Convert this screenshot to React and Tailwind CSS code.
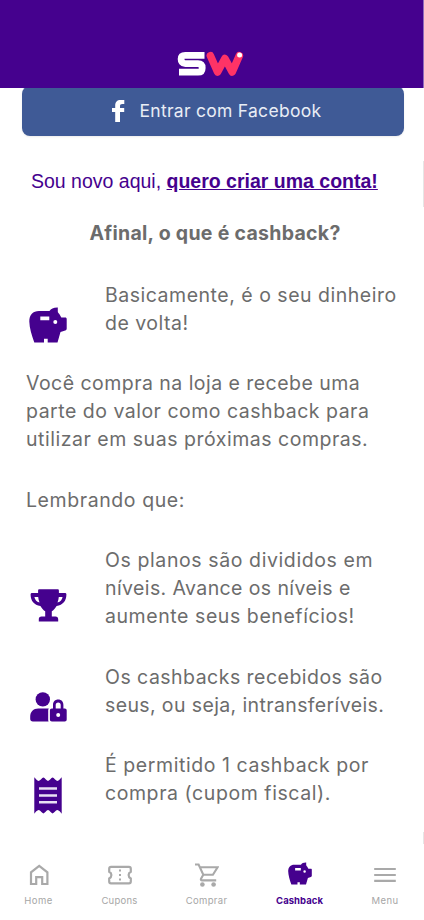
function Logo() {
  return (
    <svg className="h-[26px] w-[68px]" viewBox="0 0 68 26" fill="none" role="img" aria-label="SW">
      <path d="M27.500 4.300H8.300C5.300 4.300 4.100 5.600 4.100 8s1.200 4.700 4.200 4.700H21c3 0 4.200 1.500 4.200 4.200S24 21.200 21 21.200H2" stroke="#fff" strokeWidth="6.800" />
      <path d="M33.400 4.700 40.600 21 47.900 7.500 55.200 21 62.300 4.700" stroke="#ff3366" strokeWidth="7.600" strokeLinecap="round" strokeLinejoin="round" />
      <circle cx="62.600" cy="4" r="2.500" fill="#fff" />
    </svg>
  );
}

function Piggy({ className }) {
  return (
    <svg className={className} viewBox="0 0 38 36" fill="#45018e">
      <path
        fillRule="evenodd"
        d="M10 4h10.500C22 1.500 24.500.3 28.800.4v3.800c-.1 1.300.8 2 1.700 3l1.800 3.300H36c1.300 0 1.700.5 1.700 1.600v9.400c0 1.100-.5 1.600-1.500 2L31.500 25 28.500 35.500H18.700v-3.700h-3.700v3.700H5.300C2.500 27.500.5 21 .3 14.500.2 8 4 4 10 4ZM11.300 9.400v3.800h9V9.400h-9Zm15 3.600a2 2 0 1 0 0 4 2 2 0 0 0 0-4Z"
      />
    </svg>
  );
}

function Trophy() {
  return (
    <svg className="h-[33px] w-[37px]" viewBox="0 0 37 33" fill="#45018e">
      <path
        fillRule="evenodd"
        d="M9.500.3h18c.9 0 1.400.5 1.400 1.400v2.400h6c1 0 1.500.5 1.500 1.500 0 6.400-3.500 10.500-9.800 11.400-1.600 2.700-3.200 4.300-4.800 5.200v5.400h3.700c1.700 0 2.700 1 2.700 2.700v2.100H8.800v-2.100c0-1.700 1-2.700 2.700-2.700h3.700v-5.400c-1.600-.9-3.200-2.500-4.800-5.200C4.100 16.100.6 12 .6 5.600c0-1 .5-1.500 1.500-1.500h6V1.700C8.100.8 8.600.3 9.500.3ZM4.400 7.900c.5 2.600 2 4.600 5.100 5.500-.7-1.800-1.200-3.700-1.300-5.500H4.400Zm24.400 0c-.1 1.800-.6 3.700-1.300 5.500 3.100-.9 4.600-2.900 5.100-5.500h-3.800Z"
      />
    </svg>
  );
}

function UserLock() {
  return (
    <svg className="h-[30px] w-[37px]" viewBox="0 0 37 30" fill="#45018e">
      <circle cx="12.800" cy="7.400" r="7.200" />
      <path d="M8.300 16.500h10.500c-.5.600-.6 1.300-.6 2v9.200c0 .7.100 1.200.4 1.700H2.900C1.200 29.400.2 28.400.2 26.700v-2c0-4.900 3.200-8.200 8.100-8.200Z" />
      <path
        fillRule="evenodd"
        d="M23 16.500V13c0-3.300 2-5.400 5.200-5.400s5.200 2.100 5.200 5.400v3.500h1.300c1.300 0 2 .7 2 2v8.900c0 1.300-.7 2-2 2H21.900c-1.300 0-2-.7-2-2v-8.900c0-1.300.7-2 2-2H23Zm2.700 0h5V13c0-1.600-.9-2.600-2.500-2.600s-2.500 1-2.500 2.600v3.500ZM28.200 20.900a2 2 0 1 0 0 4 2 2 0 0 0 0-4Z"
      />
    </svg>
  );
}

function Receipt() {
  return (
    <svg className="h-[37px] w-[28px]" viewBox="0 0 28 37">
      <path
        fill="#45018e"
        d="M.3.300C1.500 1.500 3 3.900 4.700 3.900S8 .500 9.400.500s3 3.400 4.600 3.400S17.200.500 18.600.500s3 3.400 4.700 3.400S26.500 1.500 27.700.300V36.700C26.500 35.500 25 33.100 23.300 33.100S20 36.500 18.600 36.500s-3-3.400-4.600-3.400S10.800 36.500 9.400 36.500s-3-3.400-4.700-3.400S1.500 35.500.3 36.700Z"
      />
      <path d="M5 11.600h18M5 18.400h18M5 25.200h18" stroke="#e9dff4" strokeWidth="2.500" />
    </svg>
  );
}

function FacebookF() {
  return (
    <svg className="h-[22px] w-[13px]" viewBox="0 0 13 22" fill="#fff">
      <path d="M3.200 22V11.900H0V8h3.200V5.600C3.200 2.100 5.100.1 8.600.1h3.700v4h-2c-1.700 0-2.300.7-2.300 2.200V8h4.200v3.900H8V22Z" />
    </svg>
  );
}

function HomeIcon() {
  return (
    <svg className="size-6" viewBox="0 0 24 24" fill="none" stroke="#a9a9a9" strokeWidth="2.200">
      <path d="M4 21V9.300L12.200 3l8.200 6.300V21h-5.200v-6.800H9.200V21Z" />
    </svg>
  );
}

function TicketIcon() {
  return (
    <svg className="size-6" viewBox="0 0 24 24" fill="none" stroke="#a9a9a9" strokeWidth="2.200">
      <path d="M3 3.900h18c1.200 0 1.800.6 1.800 1.800v3c-1.500.7-2.200 1.800-2.200 3.400s.7 2.700 2.200 3.400v3c0 1.200-.6 1.800-1.800 1.800H3c-1.200 0-1.800-.6-1.800-1.800v-3c1.500-.7 2.200-1.800 2.200-3.400s-.7-2.700-2.200-3.400v-3C1.200 4.500 1.800 3.900 3 3.900Z" />
      <path d="M12 6.600v2M12 11v2M12 15.500v2" strokeWidth="2" />
    </svg>
  );
}

function CartIcon() {
  return (
    <svg className="size-6" viewBox="0 0 24 24" fill="none" stroke="#a9a9a9" strokeWidth="2.100">
      <path d="M0 1.500h3.600l4.700 10.300h9.600L22.600 4.300H5" />
      <path d="m8.300 11.800-2.300 4c-.4.900 0 1.600 1.100 1.600h14.100" />
      <circle cx="7.400" cy="21.500" r="2.300" fill="#a9a9a9" stroke="none" />
      <circle cx="18.600" cy="21.500" r="2.300" fill="#a9a9a9" stroke="none" />
    </svg>
  );
}

function MenuIcon() {
  return (
    <svg className="size-6" viewBox="0 0 24 24" stroke="#a9a9a9" strokeWidth="2.200">
      <path d="M1.200 6h21.600M1.200 12h21.600M1.200 17.800h21.600" />
    </svg>
  );
}

const paragraphs = [
  {
    icon: <Piggy className="h-9 w-[38px]" />,
    place: "pt-[26px] pl-[3px]",
    lines: [
      ["Basicamente, é o seu dinheiro", "tracking-[0.51px]"],
      ["de volta!", "tracking-[0.5px]"],
    ],
  },
  {
    lines: [
      ["Você compra na loja e recebe uma", "tracking-[0.46px]"],
      ["parte do valor como cashback para", "tracking-[0.5px]"],
      ["utilizar em suas próximas compras.", "tracking-[0.52px]"],
    ],
  },
  { lines: [["Lembrando que:", "tracking-[0.58px]"]] },
  {
    icon: <Trophy />,
    place: "pt-[43px] pl-1",
    lines: [
      ["Os planos são divididos em", "tracking-[0.6px]"],
      ["níveis. Avance os níveis e", "tracking-[0.4px]"],
      ["aumente seus benefícios!", "tracking-[0.57px]"],
    ],
  },
  {
    icon: <UserLock />,
    place: "pt-[29px] pl-1",
    lines: [
      ["Os cashbacks recebidos são", "tracking-[0.47px]"],
      ["seus, ou seja, intransferíveis.", "tracking-[0.38px]"],
    ],
  },
  {
    icon: <Receipt />,
    place: "pt-[26px] pl-2",
    lines: [
      ["É permitido 1 cashback por", "tracking-[0.57px]"],
      ["compra (cupom fiscal).", "tracking-[0.57px]"],
    ],
  },
];

const tabs = [
  { label: "Home", icon: <HomeIcon />, cell: "w-[77px]", text: "tracking-[0.5px] text-[#a6a6a6]" },
  { label: "Cupons", icon: <TicketIcon />, cell: "w-[85px]", text: "tracking-[0.25px] text-[#a6a6a6]" },
  { label: "Comprar", icon: <CartIcon />, cell: "w-[89px]", text: "tracking-[0.35px] text-[#a6a6a6]" },
  {
    label: "Cashback",
    icon: <Piggy className="-mt-px h-[23px] w-6" />,
    cell: "w-[97px]",
    text: "font-bold tracking-[0.05px] text-[#45018e]",
  },
  { label: "Menu", icon: <MenuIcon />, cell: "w-[74px]", text: "tracking-[0.45px] text-[#a6a6a6]" },
];

export default function App() {
  return (
    <div className="relative flex h-[920px] w-[424px] flex-col overflow-hidden bg-white font-['Inter',sans-serif] text-[#6c6c6c]">
      <header className="z-10 flex h-[88px] shrink-0 items-end justify-center border-r border-[#8f6bbd] bg-[#45018e] pr-[2px] pb-[11px]">
        <Logo />
      </header>

      <main className="flex flex-1 flex-col">
        <button className="-mt-[2px] ml-[21.5px] flex h-[50px] w-[382.500px] shrink-0 items-center rounded-lg bg-[#3f5a96] pl-[90px] shadow-[0_1px_2px_rgba(0,0,0,0.08)]">
          <FacebookF />
          <span className="ml-[15px] text-[17.5px] tracking-[0.28px] whitespace-nowrap text-[#e9edf5]">
            Entrar com Facebook
          </span>
        </button>

        <p className="mt-[31px] pl-[31px] font-['Liberation_Sans',Arial,sans-serif] text-[19.5px] leading-7 whitespace-nowrap text-[#45018e]">
          Sou novo aqui,{" "}
          <a className="font-bold underline">quero criar uma conta!</a>
        </p>

        <h1 className="mt-6 pl-[89.500px] text-[19.5px] leading-7 font-bold tracking-[0.29px] whitespace-nowrap">
          Afinal, o que é cashback?
        </h1>

        <div className="mt-[33.5px] flex flex-col gap-[32.5px] pl-[26px] text-[19.5px] leading-7">
          {paragraphs.map(({ icon, place, lines }) => (
            <div key={lines[0][0]} className="flex items-start">
              {icon && <div className={"h-14 w-[79px] shrink-0 " + place}>{icon}</div>}
              <p className="flex flex-col">
                {lines.map(([text, tracking]) => (
                  <span key={text} className={"whitespace-nowrap " + tracking}>
                    {text}
                  </span>
                ))}
              </p>
            </div>
          ))}
        </div>
      </main>

      <nav className="flex h-[57px] shrink-0">
        {tabs.map(({ label, icon, cell, text }) => (
          <a key={label} className={"flex flex-col items-center " + cell}>
            <span className="flex h-[31px] items-start">{icon}</span>
            <span className={"text-[9.5px] leading-[14px] " + text}>{label}</span>
          </a>
        ))}
      </nav>

      <div className="absolute top-[161px] right-0 h-[46px] w-px bg-[#e6e6e6]" />
      <div className="absolute top-[832px] right-0 h-3 w-px bg-[#e6e6e6]" />
    </div>
  );
}
